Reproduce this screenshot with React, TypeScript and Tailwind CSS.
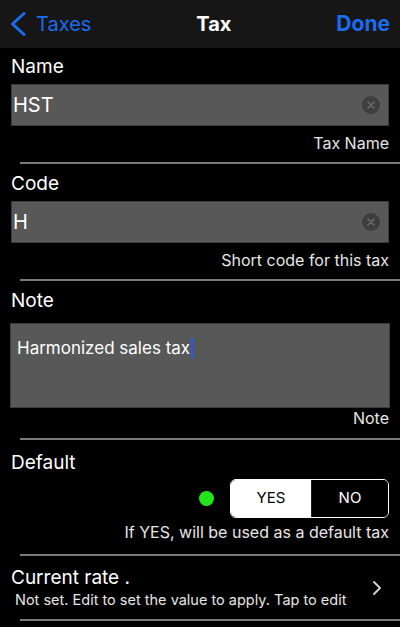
import React from "react";

const font = { fontFamily: "Inter, 'Liberation Sans', sans-serif" };

function Separator() {
  return <div className="ml-5 h-[2px] bg-[#7a7a7a]" />;
}

function ClearButton() {
  return (
    <div className="flex h-[18px] w-[18px] items-center justify-center rounded-full bg-[#3e3e3e]">
      <svg width="8" height="8" viewBox="0 0 8 8">
        <path d="M1 1L7 7M7 1L1 7" stroke="#6a6a6a" strokeWidth="1.6" strokeLinecap="round" />
      </svg>
    </div>
  );
}

function Field({ label, value, help, first }: { label: string; value: string; help: string; first?: boolean }) {
  return (
    <div className={`px-[11px] ${first ? "pt-[7px]" : "pt-2"} pb-[9px]`}>
      <div className="text-[19px] leading-6 text-white">{label}</div>
      <div className="mt-[5px] flex h-[42px] items-center justify-between border border-[#3c3c3c] bg-[#585858] pl-[1px] pr-[8px]">
        <span className="text-[20px] text-white">{value}</span>
        <ClearButton />
      </div>
      <div className="mt-[7px] text-right text-[16px] leading-5 text-[#e6e6e6]">{help}</div>
    </div>
  );
}

export default function App() {
  return (
    <div className="h-[627px] w-[400px] overflow-hidden bg-black" style={font}>
      <div className="flex h-12 items-center justify-between bg-[#161616] px-[10px]">
        <div className="flex items-center gap-[10px] text-[#1a6cf0]">
          <svg width="16" height="24" viewBox="0 0 16 24">
            <path d="M14 1.5L2.5 12L14 22.5" stroke="#1a6cf0" strokeWidth="3" fill="none" strokeLinecap="round" strokeLinejoin="round" />
          </svg>
          <span className="text-[20px]">Taxes</span>
        </div>
        <span className="text-[20px] font-bold text-white">Tax</span>
        <span className="text-[21px] font-bold text-[#1a6cf0]">Done</span>
      </div>

      <Field first label="Name" value="HST" help="Tax Name" />
      <Separator />
      <Field label="Code" value="H" help="Short code for this tax" />
      <Separator />

      <div className="px-[10px] pt-2 pb-[10px]">
        <div className="pl-[1px] text-[19px] leading-6 text-white">Note</div>
        <div className="mt-[10px] h-[85px] border border-[#3c3c3c] bg-[#585858] px-[6px] pt-[10px]">
          <span className="text-[17px] text-white">Harmonized sales tax</span>
          <span className="ml-[1px] inline-block h-[20px] w-[2px] translate-y-[4px] bg-[#1a5cff]" />
        </div>
        <div className="pr-[1px] text-right text-[16px] leading-5 text-[#e6e6e6]">Note</div>
      </div>
      <Separator />

      <div className="px-[11px] pt-[11px] pb-[12px]">
        <div className="text-[19px] leading-6 text-white">Default</div>
        <div className="mt-1 flex items-center justify-end gap-4">
          <div className="h-[15px] w-[15px] rounded-full bg-[#22e51b]" />
          <div className="flex h-[39px] w-[159px] overflow-hidden rounded-[6px] border border-white">
            <div className="flex w-[80px] items-center justify-center bg-white text-[15px] text-black">YES</div>
            <div className="flex flex-1 items-center justify-center border-l border-[#222] bg-black text-[15px] text-white">NO</div>
          </div>
        </div>
        <div className="mt-1 text-right text-[16px] leading-5 text-[#e6e6e6]">If YES, will be used as a default tax</div>
      </div>
      <Separator />

      <div className="flex items-center justify-between pl-[11px] pr-[18px] pt-[10px] pb-[9px]">
        <div>
          <div className="text-[19px] leading-6 text-white">Current rate .</div>
          <div className="pl-[4px] text-[14.5px] leading-5 text-[#e6e6e6]">Not set. Edit to set the value to apply. Tap to edit</div>
        </div>
        <svg width="10" height="16" viewBox="0 0 10 16">
          <path d="M2 2L8 8L2 14" stroke="#cfcfcf" strokeWidth="2" fill="none" strokeLinecap="round" strokeLinejoin="round" />
        </svg>
      </div>
      <Separator />
    </div>
  );
}
